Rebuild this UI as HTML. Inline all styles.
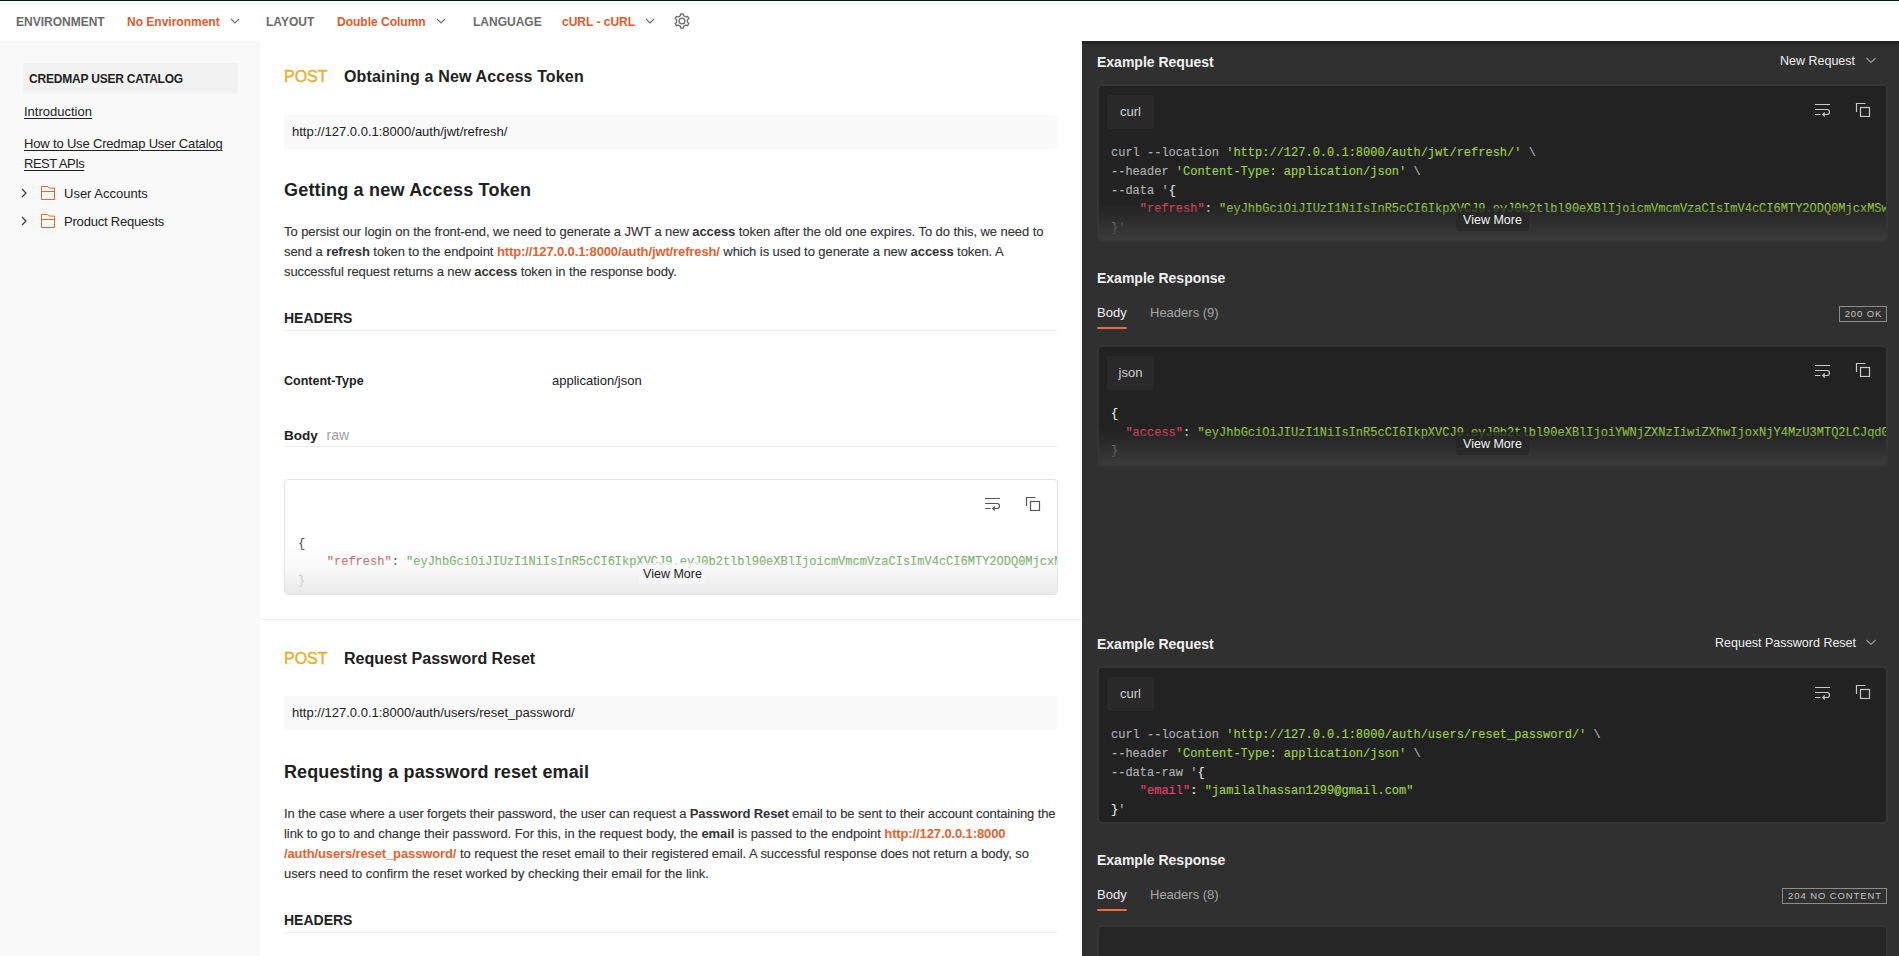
<!DOCTYPE html>
<html><head><meta charset="utf-8">
<style>
*{box-sizing:border-box;margin:0;padding:0}
html,body{width:1899px;height:956px;overflow:hidden;background:#fff;font-family:"Liberation Sans",sans-serif;color:#212121}
.a{position:absolute;white-space:nowrap}
b{font-weight:bold;-webkit-text-stroke:0}
#topline{position:absolute;left:0;top:0;width:1899px;height:1px;background:#00180f}
#topline2{position:absolute;left:0;top:3px;width:1899px;height:1px;background:#f0f0f0;box-shadow:0 2px 0 #f5f5f5}
.nav{font-size:12px;font-weight:bold;top:14px;line-height:16px}
.navl{color:#6b6b6b}
.navv{color:#e0592a}
#sidebar{position:absolute;left:0;top:41px;width:260px;height:915px;background:#f9f9f9}
#catbox{position:absolute;left:23px;top:63px;width:215px;height:31px;background:#f2f2f2;border-radius:3px}
.side{font-size:13px;color:#212121;line-height:20px}
.ul{text-decoration:underline;text-underline-offset:2px;text-decoration-thickness:1px}
#dark{position:absolute;left:1082px;top:41px;width:817px;height:915px;background:#303030;border-top:3px solid #242424}
.post{font-size:16px;line-height:20px;color:#e9ae2c;-webkit-text-stroke:0.4px #e9ae2c}
.title{font-size:16px;line-height:20px;font-weight:bold;color:#212121}
.urlbox{position:absolute;left:284px;width:773px;height:34px;background:#f9f9f9;border-radius:3px}
.url{font-size:13px;line-height:20px;color:#212121}
.h2{font-size:18px;line-height:24px;font-weight:bold;color:#212121}
.para{font-size:13px;line-height:20px;color:#333;-webkit-text-stroke:0.12px #333}
.link{color:#e4622f;font-weight:bold;letter-spacing:-0.12px;-webkit-text-stroke:0}
.h3{font-size:14px;line-height:20px;font-weight:bold;color:#212121}
.rule{position:absolute;left:284px;width:773px;height:1px;background:#ededed}
.mono{white-space:pre;font-family:"Liberation Mono",monospace;font-size:12px;line-height:18.67px;-webkit-text-stroke:0.15px currentColor}
.lcode{position:absolute;left:284px;width:774px;border:1px solid #e3e3e3;border-radius:4px;background:#fff;overflow:hidden}
.dcode{position:absolute;left:1099px;width:787px;background:#222;border-radius:3px;overflow:hidden;box-shadow:0 0 0 2px #353535}
.tab{position:absolute;left:8px;top:9px;width:47px;height:34px;background:#292929;border-radius:3px;color:#d0d0d0;font-size:13px;line-height:34px;text-align:center}
.dh{font-size:14px;line-height:20px;font-weight:bold;color:#f0f0f0}
.dd{font-size:12.5px;line-height:20px;color:#f0f0f0}
.tabs{font-size:13px;line-height:20px}
.badge{position:absolute;height:16px;border:1px solid #8c8c8c;color:#c4c4c4;font-size:9.5px;line-height:14.5px;letter-spacing:0.9px;text-align:center;padding-left:1px}
.vm{position:absolute;font-size:12.5px;line-height:17px;border-radius:4px;text-align:center}
.cD{color:#b0b0b0}.cS{color:#9fd33f}.cK{color:#e5416d}.cW{color:#e6e6e6}
.lD{color:#212121}.lS{color:#4f9a3a}.lK{color:#b8433c}
</style></head><body>
<div id="topline"></div><div id="topline2"></div>
<div class="a nav navl" style="left:16px">ENVIRONMENT</div>
<div class="a nav navv" style="left:127px">No Environment</div>
<svg class="a" style="left:229px;top:17px" width="12" height="8" viewBox="0 0 12 8"><path d="M2 2l4 4 4-4" fill="none" stroke="#6b6b6b" stroke-width="1.1"/></svg>
<div class="a nav navl" style="left:266px">LAYOUT</div>
<div class="a nav navv" style="left:337px">Double Column</div>
<svg class="a" style="left:435px;top:17px" width="12" height="8" viewBox="0 0 12 8"><path d="M2 2l4 4 4-4" fill="none" stroke="#6b6b6b" stroke-width="1.1"/></svg>
<div class="a nav navl" style="left:473px">LANGUAGE</div>
<div class="a nav navv" style="left:562px">cURL - cURL</div>
<svg class="a" style="left:644px;top:17px" width="12" height="8" viewBox="0 0 12 8"><path d="M2 2l4 4 4-4" fill="none" stroke="#6b6b6b" stroke-width="1.1"/></svg>
<svg class="a" style="left:671.6px;top:10.9px" width="20" height="20" viewBox="0 0 20 20"><path d="M11.54 4.62 L11.27 2.81 L8.73 2.81 L8.46 4.62 L6.11 5.97 L4.41 5.31 L3.14 7.50 L4.57 8.65 L4.57 11.35 L3.14 12.50 L4.41 14.69 L6.11 14.03 L8.46 15.38 L8.73 17.19 L11.27 17.19 L11.54 15.38 L13.89 14.03 L15.59 14.69 L16.86 12.50 L15.43 11.35 L15.43 8.65 L16.86 7.50 L15.59 5.31 L13.89 5.97Z" fill="none" stroke="#6b6b6b" stroke-width="1.3" stroke-linejoin="round"/><circle cx="10" cy="10" r="2.9" fill="none" stroke="#6b6b6b" stroke-width="1.3"/></svg>

<div id="sidebar"></div>
<div id="catbox"></div>
<div class="a" style="left:29px;top:71px;font-size:12px;line-height:16px;font-weight:bold;letter-spacing:-0.2px;color:#212121">CREDMAP USER CATALOG</div>
<div class="a side" style="left:24px;top:102px"><span class="ul">Introduction</span></div>
<div class="a side" style="left:24px;top:134px;letter-spacing:-0.17px"><span class="ul">How to Use Credmap User Catalog</span><br><span class="ul" style="letter-spacing:-0.5px">REST APIs</span></div>
<svg class="a" style="left:20px;top:188px" width="8" height="10" viewBox="0 0 8 10"><path d="M2 1l4 4-4 4" fill="none" stroke="#3a3a3a" stroke-width="1.2"/></svg>
<svg class="a" style="left:40px;top:185px" width="16" height="16" viewBox="0 0 16 16"><path d="M1.5 1.5h6.3l1.5 1.6h5.2v11.4h-13z M1.5 6.5h13" fill="none" stroke="#d96a38" stroke-width="1"/></svg>
<div class="a side" style="left:64px;top:184px">User Accounts</div>
<svg class="a" style="left:20px;top:216px" width="8" height="10" viewBox="0 0 8 10"><path d="M2 1l4 4-4 4" fill="none" stroke="#3a3a3a" stroke-width="1.2"/></svg>
<svg class="a" style="left:40px;top:213px" width="16" height="16" viewBox="0 0 16 16"><path d="M1.5 1.5h6.3l1.5 1.6h5.2v11.4h-13z M1.5 6.5h13" fill="none" stroke="#d96a38" stroke-width="1"/></svg>
<div class="a side" style="left:64px;top:212px;letter-spacing:-0.2px">Product Requests</div>

<!-- MAIN section 1 -->
<div class="a post" style="left:284px;top:67px">POST</div>
<div class="a title" style="left:344px;top:67px;letter-spacing:0.15px">Obtaining a New Access Token</div>
<div class="urlbox" style="top:115px"></div>
<div class="a url" style="left:292px;top:122px">http://127.0.0.1:8000/auth/jwt/refresh/</div>
<div class="a h2" style="left:284px;top:178px;letter-spacing:0.2px">Getting a new Access Token</div>
<div class="a para" style="left:284px;top:222px;letter-spacing:-0.068px">To persist our login on the front-end, we need to generate a JWT a new <b>access</b> token after the old one expires. To do this, we need to</div>
<div class="a para" style="left:284px;top:242px;letter-spacing:-0.067px">send a <b>refresh</b> token to the endpoint <span class="link">http://127.0.0.1:8000/auth/jwt/refresh/</span> which is used to generate a new <b>access</b> token. A</div>
<div class="a para" style="left:284px;top:262px;letter-spacing:-0.1px">successful request returns a new <b>access</b> token in the response body.</div>
<div class="a h3" style="left:284px;top:308px">HEADERS</div>
<div class="rule" style="top:330px"></div>
<div class="a" style="left:284px;top:371px;font-size:12.5px;line-height:20px;font-weight:bold">Content-Type</div>
<div class="a url" style="left:552px;top:371px">application/json</div>
<div class="a" style="left:284px;top:425px;font-size:13.5px;line-height:20px;font-weight:bold">Body <span style="font-weight:normal;font-size:14px;color:#a0a0a0;margin-left:5px">raw</span></div>
<div class="rule" style="top:446px"></div>

<div class="lcode" style="top:479px;height:116px">
  <svg class="a" style="left:699px;top:15px" width="18" height="16" viewBox="0 0 18 16"><path d="M1 3.5h15 M1 8.5h12a2.5 2.5 0 0 1 0 5H9 M1 13.5h5.5 M10.8 11.5l-2 2 2 2" fill="none" stroke="#555" stroke-width="1.2"/></svg>
  <svg class="a" style="left:740px;top:15px" width="16" height="16" viewBox="0 0 16 16"><path d="M1.5 11V2.5h9" fill="none" stroke="#555" stroke-width="1.2"/><rect x="5.5" y="6.5" width="9" height="9" fill="none" stroke="#555" stroke-width="1.2"/></svg>
  <div class="a mono" style="left:13px;top:54.5px"><span style="color:#555">{</span><br>    <span class="lK">"refresh"</span><span class="lD">: </span><span class="lS">"eyJhbGciOiJIUzI1NiIsInR5cCI6IkpXVCJ9.eyJ0b2tlbl90eXBlIjoicmVmcmVzaCIsImV4cCI6MTY2ODQ0MjcxMSwianRpIjoi</span><br><span style="color:#999">}</span></div>
  <div class="a" style="left:0;top:66px;width:774px;height:50px;background:linear-gradient(rgba(250,250,250,0),rgba(242,242,242,0.45) 45%,rgba(230,230,230,0.95))"></div>
  <div class="vm" style="left:354px;top:83px;width:67px;height:21px;line-height:21px;padding-top:1px;color:#212121;background:rgba(246,246,246,0.72)">View More</div>
</div>
<div class="a" style="left:260px;top:619px;width:821px;height:1px;background:#ececec"></div>

<!-- MAIN section 2 -->
<div class="a post" style="left:284px;top:649px">POST</div>
<div class="a title" style="left:344px;top:649px;letter-spacing:0.0px">Request Password Reset</div>
<div class="urlbox" style="top:696px"></div>
<div class="a url" style="left:292px;top:703px">http://127.0.0.1:8000/auth/users/reset_password/</div>
<div class="a h2" style="left:284px;top:760px;letter-spacing:0.12px">Requesting a password reset email</div>
<div class="a para" style="left:284px;top:804px;letter-spacing:-0.115px">In the case where a user forgets their password, the user can request a <b>Password Reset</b> email to be sent to their account containing the</div>
<div class="a para" style="left:284px;top:824px;letter-spacing:-0.067px">link to go to and change their password. For this, in the request body, the <b>email</b> is passed to the endpoint <span class="link">http://127.0.0.1:8000</span></div>
<div class="a para" style="left:284px;top:844px;letter-spacing:-0.066px"><span class="link">/auth/users/reset_password/</span> to request the reset email to their registered email. A successful response does not return a body, so</div>
<div class="a para" style="left:284px;top:864px;letter-spacing:-0.038px">users need to confirm the reset worked by checking their email for the link.</div>
<div class="a h3" style="left:284px;top:910px">HEADERS</div>
<div class="rule" style="top:932px"></div>

<!-- DARK PANEL -->
<div id="dark"></div>
<div class="a dh" style="left:1097px;top:52px">Example Request</div>
<div class="a dd" style="left:1780px;top:51px">New Request</div>
<svg class="a" style="left:1865px;top:56px" width="12" height="8" viewBox="0 0 12 8"><path d="M1.5 2l4.5 4.5 4.5-4.5" fill="none" stroke="#9a9a9a" stroke-width="1.2"/></svg>

<div class="dcode" style="top:86px;height:154px">
  <div class="tab">curl</div>
  <svg class="a" style="left:715px;top:15px" width="18" height="16" viewBox="0 0 18 16"><path d="M1 3.5h15 M1 8.5h12a2.5 2.5 0 0 1 0 5H9 M1 13.5h5.5 M10.8 11.5l-2 2 2 2" fill="none" stroke="#c8c8c8" stroke-width="1.2"/></svg>
  <svg class="a" style="left:756px;top:15px" width="16" height="16" viewBox="0 0 16 16"><path d="M1.5 11V2.5h9" fill="none" stroke="#c8c8c8" stroke-width="1.2"/><rect x="5.5" y="6.5" width="9" height="9" fill="none" stroke="#c8c8c8" stroke-width="1.2"/></svg>
  <div class="a mono cD" style="left:12px;top:58.3px">curl --location <span class="cS">'http://127.0.0.1:8000/auth/jwt/refresh/'</span> \<br>--header <span class="cS">'Content-Type: application/json'</span> \<br>--data <span class="cD">'</span><span class="cW">{</span><br>    <span class="cK">"refresh"</span><span class="cW">: </span><span class="cS">"eyJhbGciOiJIUzI1NiIsInR5cCI6IkpXVCJ9.eyJ0b2tlbl90eXBlIjoicmVmcmVzaCIsImV4cCI6MTY2ODQ0MjcxMSwianRpIjoi</span><br><span class="cW">}</span>'</div>
  <div class="a" style="left:0;top:117px;width:787px;height:37px;background:linear-gradient(rgba(35,35,35,0),rgba(50,50,50,0.72) 50%,#3b3b3b)"></div>
  <div class="vm" style="left:357px;top:122px;width:73px;height:23px;line-height:23px;padding-top:1px;color:#f4f4f4;background:rgba(38,38,38,0.72)">View More</div>
</div>

<div class="a dh" style="left:1097px;top:268px">Example Response</div>
<div class="a tabs" style="left:1097px;top:303px;color:#f0f0f0">Body</div>
<div class="a" style="left:1097px;top:327px;width:30px;height:2px;background:#f26b3a;border-radius:1px"></div>
<div class="a tabs" style="left:1150px;top:303px;color:#a6a6a6">Headers (9)</div>
<div class="badge" style="left:1839px;top:306px;width:48px">200 OK</div>

<div class="dcode" style="top:347px;height:118px">
  <div class="tab">json</div>
  <svg class="a" style="left:715px;top:14.5px" width="18" height="16" viewBox="0 0 18 16"><path d="M1 3.5h15 M1 8.5h12a2.5 2.5 0 0 1 0 5H9 M1 13.5h5.5 M10.8 11.5l-2 2 2 2" fill="none" stroke="#c8c8c8" stroke-width="1.2"/></svg>
  <svg class="a" style="left:755.5px;top:14px" width="16" height="16" viewBox="0 0 16 16"><path d="M1.5 11V2.5h9" fill="none" stroke="#c8c8c8" stroke-width="1.2"/><rect x="5.5" y="6.5" width="9" height="9" fill="none" stroke="#c8c8c8" stroke-width="1.2"/></svg>
  <div class="a mono" style="left:12px;top:58px"><span class="cW">{</span><br>  <span class="cK">"access"</span><span class="cW">: </span><span class="cS">"eyJhbGciOiJIUzI1NiIsInR5cCI6IkpXVCJ9.eyJ0b2tlbl90eXBlIjoiYWNjZXNzIiwiZXhwIjoxNjY4MzU3MTQ2LCJqdGkiOi</span><br><span class="cW">}</span></div>
  <div class="a" style="left:0;top:81px;width:787px;height:37px;background:linear-gradient(rgba(35,35,35,0),rgba(50,50,50,0.72) 50%,#3b3b3b)"></div>
  <div class="vm" style="left:357px;top:85px;width:73px;height:23px;line-height:23px;padding-top:1px;color:#f4f4f4;background:rgba(38,38,38,0.72)">View More</div>
</div>

<div class="a dh" style="left:1097px;top:634px">Example Request</div>
<div class="a dd" style="left:1715px;top:633px">Request Password Reset</div>
<svg class="a" style="left:1865px;top:638px" width="12" height="8" viewBox="0 0 12 8"><path d="M1.5 2l4.5 4.5 4.5-4.5" fill="none" stroke="#9a9a9a" stroke-width="1.2"/></svg>

<div class="dcode" style="top:668px;height:154px">
  <div class="tab">curl</div>
  <svg class="a" style="left:715px;top:15.5px" width="18" height="16" viewBox="0 0 18 16"><path d="M1 3.5h15 M1 8.5h12a2.5 2.5 0 0 1 0 5H9 M1 13.5h5.5 M10.8 11.5l-2 2 2 2" fill="none" stroke="#c8c8c8" stroke-width="1.2"/></svg>
  <svg class="a" style="left:755.5px;top:15px" width="16" height="16" viewBox="0 0 16 16"><path d="M1.5 11V2.5h9" fill="none" stroke="#c8c8c8" stroke-width="1.2"/><rect x="5.5" y="6.5" width="9" height="9" fill="none" stroke="#c8c8c8" stroke-width="1.2"/></svg>
  <div class="a mono cD" style="left:12px;top:58.3px">curl --location <span class="cS">'http://127.0.0.1:8000/auth/users/reset_password/'</span> \<br>--header <span class="cS">'Content-Type: application/json'</span> \<br>--data-raw <span class="cD">'</span><span class="cW">{</span><br>    <span class="cK">"email"</span><span class="cW">: </span><span class="cS">"jamilalhassan1299@gmail.com"</span><br><span class="cW">}</span>'</div>
</div>

<div class="a dh" style="left:1097px;top:850px">Example Response</div>
<div class="a tabs" style="left:1097px;top:885px;color:#f0f0f0">Body</div>
<div class="a" style="left:1097px;top:909px;width:30px;height:2px;background:#f26b3a;border-radius:1px"></div>
<div class="a tabs" style="left:1150px;top:885px;color:#a6a6a6">Headers (8)</div>
<div class="badge" style="left:1782px;top:888px;width:105px">204 NO CONTENT</div>
<div class="dcode" style="top:927px;height:40px;background:#262626"></div>
</body></html>
